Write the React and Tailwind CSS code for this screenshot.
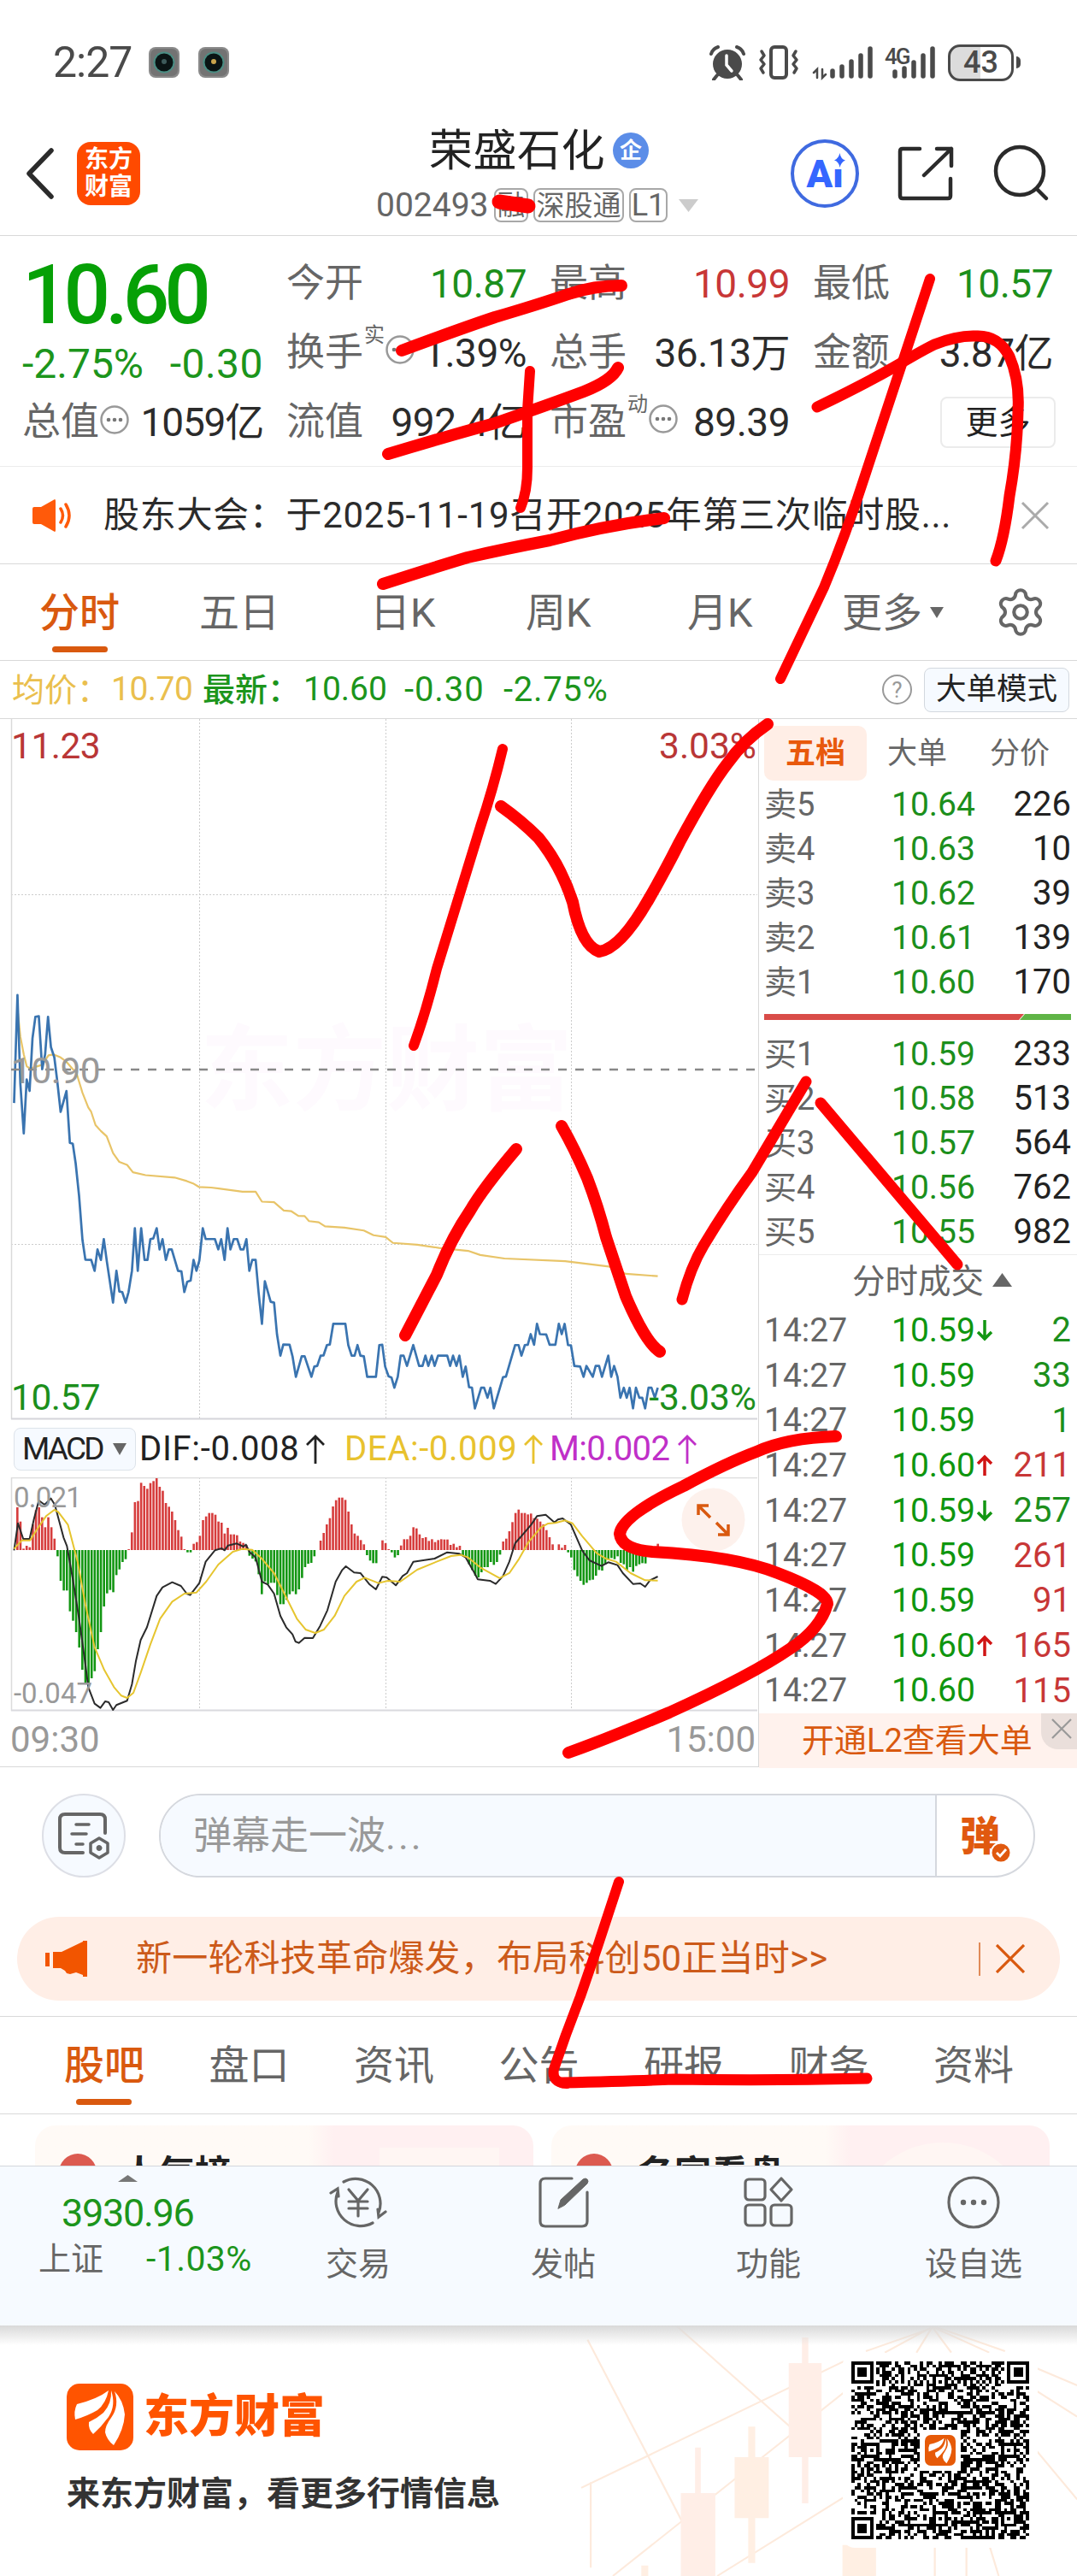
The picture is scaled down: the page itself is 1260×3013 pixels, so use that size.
import { Settings } from "lucide-react"

const stats = [
  [
    { label: "今开", value: "10.87", color: "text-[#1c8f1c]" },
    { label: "最高", value: "10.99", color: "text-[#c83737]" },
    { label: "最低", value: "10.57", color: "text-[#1c8f1c]" },
  ],
  [
    { label: "换手", sup: "实", info: true, value: "1.39%", color: "text-[#2b2b2b]" },
    { label: "总手", value: "36.13万", color: "text-[#2b2b2b]" },
    { label: "金额", value: "3.87亿", color: "text-[#2b2b2b]" },
  ],
  [
    { label: "流值", value: "992.4亿", color: "text-[#2b2b2b]" },
    { label: "市盈", sup: "动", info: true, value: "89.39", color: "text-[#2b2b2b]" },
  ],
]

const periods = [
  { name: "五日", width: "w-[200px]" },
  { name: "日K", width: "w-[182px]" },
  { name: "周K", width: "w-[189px]" },
  { name: "月K", width: "w-[181px]" },
]

const asks = [
  ["卖5", "10.64", "226"],
  ["卖4", "10.63", "10"],
  ["卖3", "10.62", "39"],
  ["卖2", "10.61", "139"],
  ["卖1", "10.60", "170"],
]

const bids = [
  ["买1", "10.59", "233"],
  ["买2", "10.58", "513"],
  ["买3", "10.57", "564"],
  ["买4", "10.56", "762"],
  ["买5", "10.55", "982"],
]

const trades = [
  { price: "10.59", dir: "down", vol: "2", buy: false },
  { price: "10.59", vol: "33", buy: false },
  { price: "10.59", vol: "1", buy: false },
  { price: "10.60", dir: "up", vol: "211", buy: true },
  { price: "10.59", dir: "down", vol: "257", buy: false },
  { price: "10.59", vol: "261", buy: true },
  { price: "10.59", vol: "91", buy: true },
  { price: "10.60", dir: "up", vol: "165", buy: true },
  { price: "10.60", vol: "115", buy: true },
]

const pricePoints =
  "29,465 36,98 42,400 49,568 55,385 61,424 67,245 73,172 80,170 87,350 93,300 99,172 105,275 112,310 118,390 125,495 137,424 144,600 150,603 156,670 163,780 170,930 176,997 188,998 195,1035 201,962 208,998 214,927 220,1000 233,1143 240,1035 246,1105 252,1107 259,1143 265,1107 272,1035 278,890 284,1035 291,890 298,998 304,998 310,927 316,925 323,890 329,962 335,927 342,998 348,962 354,962 367,1035 374,1037 380,1107 386,1072 393,1068 399,998 405,1035 411,1000 418,890 424,927 443,927 450,962 456,927 463,998 469,890 475,962 482,927 489,927 496,962 502,962 508,927 514,1035 520,998 527,998 533,1107 540,1215 546,1070 558,1140 565,1143 571,1250 578,1323 584,1285 597,1286 603,1325 610,1395 622,1325 628,1325 642,1395 648,1360 654,1358 661,1323 667,1322 674,1287 680,1285 687,1215 712,1215 718,1287 725,1323 731,1323 737,1287 743,1323 750,1325 757,1395 775,1395 782,1287 788,1286 794,1360 801,1393 807,1397 813,1432 820,1395 826,1323 832,1323 839,1358 852,1287 864,1358 871,1358 877,1323 883,1358 890,1323 896,1358 903,1323 922,1323 928,1358 934,1323 941,1358 947,1323 954,1395 960,1360 967,1430 973,1432 979,1502 992,1432 998,1432 1005,1466 1011,1432 1018,1502 1037,1396 1043,1394 1062,1287 1069,1287 1075,1323 1082,1287 1088,1286 1094,1250 1101,1286 1107,1215 1113,1250 1126,1251 1133,1286 1145,1286 1152,1215 1158,1250 1164,1215 1171,1287 1177,1288 1184,1358 1196,1360 1203,1395 1209,1358 1222,1395 1228,1358 1235,1358 1241,1395 1254,1323 1260,1395 1266,1358 1273,1395 1279,1466 1286,1432 1292,1466 1298,1432 1305,1502 1311,1432 1318,1466 1324,1466 1330,1502 1337,1432 1343,1432 1350,1466 1356,1432"

const avgPoints =
  "37,160 42,240 49,300 55,340 62,348 87,335 100,303 110,300 125,310 137,325 150,350 157,360 170,430 182,480 188,495 197,540 208,560 220,578 233,635 246,665 262,675 274,700 300,710 360,718 385,730 398,738 410,750 435,752 500,766 527,766 540,800 565,802 585,830 600,832 615,848 628,849 637,866 657,870 670,884 710,888 750,898 770,914 795,920 810,940 860,946 905,957 965,967 990,981 1040,993 1165,1002 1255,1020 1290,1045 1356,1053"

const difPoints =
  "29,460 37,365 48,420 61,420 70,350 80,285 92,300 105,278 113,300 131,415 138,445 150,560 163,700 176,860 182,940 195,998 207,1013 217,990 224,993 233,1020 240,1003 262,988 272,930 280,850 290,775 303,730 323,620 335,590 355,572 373,585 385,612 392,617 411,575 424,500 443,460 457,453 463,460 470,443 488,436 502,447 507,440 514,465 527,485 540,570 552,580 565,612 578,690 590,730 603,755 609,780 616,785 628,767 645,768 660,725 675,670 692,570 705,530 713,516 730,538 743,540 762,580 775,597 788,553 797,555 816,583 830,550 839,540 852,500 896,489 922,467 947,472 960,485 975,530 985,562 1010,567 1022,578 1037,550 1050,500 1062,435 1080,400 1095,370 1107,340 1125,335 1143,362 1150,352 1160,348 1177,370 1200,460 1215,495 1240,515 1254,502 1273,512 1284,540 1305,578 1320,576 1330,588 1340,565 1356,552"

const deaPoints =
  "29,455 45,425 62,425 75,390 95,340 112,318 120,325 140,370 160,500 176,650 195,800 215,880 235,940 250,970 262,978 275,960 290,890 310,790 330,700 355,640 380,612 405,608 425,570 450,510 480,465 500,455 520,458 540,490 565,540 590,625 612,700 630,738 650,750 668,738 690,690 710,620 735,570 752,556 780,575 800,567 825,570 860,528 900,500 930,480 950,476 965,485 990,520 1030,558 1050,540 1070,490 1090,430 1115,380 1130,366 1145,364 1165,355 1180,365 1200,410 1230,470 1250,490 1270,500 1300,540 1330,565 1356,566"

// one value per minute, positive above the zero line
const macdBars = [
  0, 150, 100, 5, 15, 10, 90, 140, 150, 115, 80, 115, 80, 40, -22, -108, -142, -142, -215, -248, -288, -342, -420, -470,
  -475, -450, -425, -348, -288, -198, -152, -140, -148, -88, -68, -42, -32, 3, 62, 168, 172, 236, 225, 215, 235, 242,
  252, 222, 208, 165, 152, 135, 105, 70, 47, 3, -8, -8, 22, 28, 50, 105, 118, 130, 130, 124, 100, 96, 58, 78, 55, 55,
  52, 30, 25, 18, -20, -30, -40, -85, -155, -110, -120, -115, -115, -158, -190, -190, -175, -155, -145, -155, -138, -98,
  -60, -48, -45, -22, 0, 33, 60, 90, 112, 153, 175, 184, 184, 176, 135, 90, 58, 50, 35, 20, -18, -37, -46, -46, 0, 34,
  24, 3, -8, -26, -18, 16, 38, 38, 50, 80, 76, 55, 42, 45, 32, 38, 28, 35, 38, 37, 37, 18, 22, 10, 15, -18, -24, -50,
  -70, -90, -96, -78, -60, -60, -42, -52, -42, -16, 30, 40, 66, 98, 130, 142, 130, 130, 125, 128, 112, 110, 100, 90, 70,
  45, 20, 0, 20, 8, 18, -8, -26, -70, -92, -108, -122, -115, -106, -104, -90, -70, -72, -50, -32, -28, -32, -22, -45,
  -50, -70, -60, -76, -56, -50, -46, -47, -10, 0, 2, 22,
]

const sections = ["股吧", "盘口", "资讯", "公告", "研报", "财务", "资料"]

function StatusBar() {
  return (
    <div className="flex h-[146px] items-center pl-[62px] text-[#4a4a4a]">
      <span className="w-[112px] text-[50px] leading-none tracking-[-1px]">2:27</span>
      <div className="flex gap-[22px]">
        {["#3d5a5a", "#c9a44c"].map((dot) => (
          <svg key={dot} className="h-9 w-9" viewBox="0 0 36 36">
            <rect width="36" height="36" rx="8" fill="#8a8a8a" />
            <rect x="2" y="2" width="32" height="32" rx="7" fill="#737373" />
            <circle cx="18" cy="18" r="12.5" fill="#4a8e84" />
            <circle cx="18" cy="18" r="10.5" fill="#0a1414" />
            <circle cx="18" cy="17" r="3" fill={dot} />
          </svg>
        ))}
      </div>
      <svg className="ml-[562px] h-[42px] w-[42px]" viewBox="0 0 42 42" fill="none" stroke="#4a4a4a">
        <circle cx="21" cy="23" r="17" fill="#4a4a4a" stroke="none" />
        <path d="M2 11a12 12 0 0 1 8-8M40 11a12 12 0 0 0-8-8M9 36l-4 5M33 36l4 5" strokeWidth="4" strokeLinecap="round" />
        <path d="M20 13v11l6 7" stroke="#fff" strokeWidth="3.5" strokeLinecap="round" />
      </svg>
      <svg className="ml-[15px] h-[42px] w-12" viewBox="0 0 48 42" fill="none" stroke="#4a4a4a" strokeWidth="4" strokeLinecap="round" strokeLinejoin="round">
        <rect x="15" y="3" width="18" height="36" rx="4" />
        <path d="M4 8l3 5-4 5 4 5-4 5 3 5" strokeWidth="3.5" />
        <path d="M44 8l-3 5 4 5-4 5 4 5-3 5" strokeWidth="3.5" />
      </svg>
      <svg className="ml-[15px] h-[42px] w-[72px]" viewBox="0 0 72 42" fill="none" stroke="#4a4a4a" strokeWidth="5.5" strokeLinecap="round">
        <path d="M24 31v6M35 26v11M46 20v17M57 13v24M68 5v32" />
        <path d="M6 39V29l-4 4M12 29v10l4-4" strokeWidth="2.5" />
      </svg>
      <div className="relative ml-[13px] h-[42px] w-[59px]">
        <span className="absolute left-0 top-[1px] text-[26px] font-medium leading-none tracking-[-2px]">4G</span>
        <svg className="h-[42px] w-[59px]" viewBox="0 0 59 42" fill="none" stroke="#4a4a4a" strokeWidth="5.5" strokeLinecap="round">
          <path d="M12 32v5M23 28v9M34 21v16M45 13v24M56 5v32" />
        </svg>
      </div>
      <div className="ml-[15px] flex h-[43px] w-[77px] items-center justify-center rounded-[14px] border-[3px] border-[#4a4a4a] bg-linear-to-r from-[#dcdcdc] from-50% to-white to-50%">
        <span className="text-[36px] font-medium leading-none">43</span>
      </div>
      <div className="ml-[3px] h-[14px] w-[5px] rounded-r-full bg-[#4a4a4a]" />
    </div>
  )
}

function Header() {
  return (
    <header className="flex h-[130px] items-start border-b border-[#d9d9d9] pl-[30px]">
      <svg className="mt-[27px] h-[60px] w-[34px]" viewBox="0 0 34 60" fill="none" stroke="#2b2b2b" strokeWidth="5.5" strokeLinecap="round" strokeLinejoin="round">
        <path d="M30 3L4 30l26 27" />
      </svg>
      <div className="ml-[26px] mt-5 flex h-[74px] w-[74px] flex-col items-center justify-center rounded-[16px] bg-[#ff4a00] text-[28px] font-bold leading-[32px] text-white">
        <span>东方</span>
        <span>财富</span>
      </div>
      <div className="ml-[276px] w-[377px]">
        <div className="ml-[62px] mt-[5px] flex h-[50px] items-center">
          <h1 className="text-[51px] leading-none tracking-[0.500px] text-[#222]">荣盛石化</h1>
          <span className="ml-[9px] flex h-[42px] w-[42px] items-center justify-center rounded-full bg-[#5b8de8] text-[26px] font-bold leading-none text-white">
            企
          </span>
        </div>
        <div className="mt-[19px] flex h-10 items-center text-[38px] leading-none text-[#666]">
          <span className="w-[138px] text-[39px]">002493</span>
          <span className="mr-[6px] flex h-10 w-10 items-center justify-center rounded-[8px] border-2 border-[#a8a8a8] text-[32px]">融</span>
          <span className="mr-[6px] flex h-10 w-[106px] items-center justify-center rounded-[8px] border-2 border-[#a8a8a8] text-[33px]">深股通</span>
          <span className="flex h-10 w-[45px] items-center justify-center rounded-[8px] border-2 border-[#a8a8a8] text-[36px]">L1</span>
          <svg className="ml-[13px] h-[15px] w-[23px]" viewBox="0 0 23 15">
            <path d="M0 0h23L11.500 15z" fill="#ccc" />
          </svg>
        </div>
      </div>
      <div className="relative ml-[108px] mt-[17px] flex h-20 w-20 items-center justify-center rounded-full border-[4px] border-[#3f6ae0] text-[#3566ff]">
        <span className="text-[45px] font-black leading-none">Ai</span>
        <svg className="absolute right-[10px] top-[11px] h-[21px] w-[17px]" viewBox="0 0 17 21">
          <rect x="2" y="5" width="13" height="15" fill="#fff" />
          <path d="M8.500 1q1 7 6.500 8.500-5 2-6.500 8.500-1-7-6.500-8.500 5-2 6.500-8.500z" fill="#3566ff" />
        </svg>
      </div>
      <svg className="ml-[45px] mt-[25px] h-[64px] w-[66px]" viewBox="0 0 66 64" fill="none" stroke="#2b2b2b" strokeWidth="4.500" strokeLinecap="round" strokeLinejoin="round">
        <path d="M26 3H6q-3 0-3 3v52q0 3 3 3h53q3 0 3-3V38M46 3h17v20M63 3L31 34" />
      </svg>
      <svg className="ml-[45px] mt-[23px] h-[68px] w-[68px]" viewBox="0 0 68 68" fill="none" stroke="#2b2b2b" strokeWidth="4.500" strokeLinecap="round">
        <circle cx="32" cy="31" r="28" />
        <path d="M52 52l11 11" />
      </svg>
    </header>
  )
}

function InfoDots() {
  return (
    <svg className="h-[34px] w-[34px] shrink-0" viewBox="0 0 34 34" fill="none" stroke="#999" strokeWidth="2.500">
      <circle cx="17" cy="17" r="15.500" />
      <g fill="#777" stroke="none">
        <circle cx="10" cy="17" r="2.300" />
        <circle cx="17" cy="17" r="2.300" />
        <circle cx="24" cy="17" r="2.300" />
      </g>
    </svg>
  )
}

function Quote() {
  return (
    <section className="flex h-[270px] border-b border-[#ececec] pt-[15px] leading-none">
      <div className="w-[308px] pl-[26px]">
        <div className="flex h-[108px] items-center text-[96px] font-medium tracking-[-6px] text-[#06a006]">10.60</div>
        <div className="flex h-[54px] items-center justify-between text-[48px] text-[#1c951c]">
          <span>-2.75%</span>
          <span className="tracking-[0.500px]">-0.30</span>
        </div>
        <div className="flex h-[81px] items-center text-[#666]">
          <span className="text-[45px]">总值</span>
          <span className="mb-[6px] ml-[1px]">
            <InfoDots />
          </span>
          <span className="ml-auto text-[46px] tracking-[-1.200px] text-[#2b2b2b]">1059亿</span>
        </div>
      </div>
      <div className="ml-[27px]">
        {stats.map((row, i) => (
          <div key={i} className="flex h-[81px] items-center gap-[27px]">
            {row.map((s) => (
              <div key={s.label} className="flex w-[281px] items-center">
                <span className="text-[45px] text-[#666]">{s.label}</span>
                {s.sup && <span className="mb-[42px] ml-[1px] text-[24px] text-[#666]">{s.sup}</span>}
                {s.info && (
                  <span className="mb-[8px] ml-[1px]">
                    <InfoDots />
                  </span>
                )}
                <span className={`ml-auto text-[46px] tracking-[-0.500px] ${s.color}`}>{s.value}</span>
              </div>
            ))}
            {i === 2 && (
              <button className="ml-[149px] h-[60px] w-[135px] rounded-[8px] border-2 border-[#ebebeb] text-[38px] text-[#222]">
                更多
              </button>
            )}
          </div>
        ))}
      </div>
    </section>
  )
}

function Notice() {
  return (
    <div className="flex h-[114px] items-center border-b border-[#d9d9d9] pl-[37px]">
      <svg className="h-10 w-[50px]" viewBox="0 0 50 40" fill="none" stroke="#ff5a0a" strokeWidth="3.500" strokeLinecap="round">
        <path d="M3 10h8L27 1q1 0 1 2v34q0 2-1 2L11 30H3q-2 0-2-2V12q0-2 2-2z" fill="#ff5a0a" stroke="none" />
        <path d="M34 12q5 8 0 16M40 7q8 13 0 26" />
      </svg>
      <p className="ml-[34px] w-[1000px] whitespace-nowrap text-[42px] leading-none tracking-[0.700px] text-[#2b2b2b]">
        股东大会：于2025-11-19召开2025年第三次临时股...
      </p>
      <svg className="ml-[73px] h-[34px] w-[34px]" viewBox="0 0 34 34" stroke="#aaa" strokeWidth="3">
        <path d="M2 2l30 30M32 2L2 32" />
      </svg>
    </div>
  )
}

function PeriodTabs() {
  return (
    <nav className="flex h-[113px] items-center border-b border-[#d9d9d9] pl-[46px] text-[47px] leading-none text-[#666]">
      <div className="relative w-[187px] font-medium text-[#d9590f]">
        分时
        <span className="absolute left-[15px] top-[63px] h-[7px] w-[65px] rounded-full bg-[#d9590f]" />
      </div>
      {periods.map((p) => (
        <div key={p.name} className={p.width}>
          {p.name}
        </div>
      ))}
      <div className="flex w-[178px] items-center">
        更多
        <svg className="ml-[9px] h-[13px] w-4" viewBox="0 0 16 13">
          <path d="M0 0h16L8 13z" fill="#666" />
        </svg>
      </div>
      <Settings className="h-[62px] w-[62px] text-[#666]" strokeWidth={1.6} />
    </nav>
  )
}

function ChartInfo() {
  return (
    <div className="flex h-[68px] items-center border-b border-[#d9d9d9] pl-[14px] text-[38px] leading-none text-[#1c951c]">
      <span className="w-[116px] text-[#eabf4e]">均价：</span>
      <span className="w-[107px] text-[39px] tracking-[-0.500px] text-[#eabf4e]">10.70</span>
      <span className="w-[118px] font-medium">最新：</span>
      <span className="w-[118px] text-[39px]">10.60</span>
      <span className="w-[116px] text-[40px] tracking-[0.900px]">-0.30</span>
      <span className="text-[40px] tracking-[0.700px]">-2.75%</span>
      <span className="ml-auto flex h-[35px] w-[35px] items-center justify-center rounded-full border-[2.500px] border-[#999] text-[26px] text-[#999]">?</span>
      <button className="ml-[14px] mr-[9px] h-[52px] w-[170px] rounded-[8px] border border-[#d3d8de] bg-[#f6faff] text-[35.500px] text-[#222]">
        大单模式
      </button>
    </div>
  )
}

function PriceChart() {
  return (
    <svg className="block h-[820px] w-[886px]" viewBox="0 0 886 820" fill="none">
      <text x="234" y="449" fontSize="109" fontWeight="700" fill="#fefafe">
        东方财富
      </text>
      <g stroke="#ccc" strokeDasharray="2 2">
        <path d="M233.500 0v818M451.500 0v818M668.500 0v818M13 205.500h873M13 614.500h873" />
      </g>
      <path d="M13.500 0v819" stroke="#d9d9d9" strokeWidth="1.500" />
      <path d="M13 818.500h873" stroke="#d5d5da" strokeWidth="2" />
      <g transform="translate(0 289) scale(0.5675 0.3444)" strokeLinejoin="round">
        <polyline points={avgPoints} stroke="#e8c468" strokeWidth="2.200" vectorEffect="non-scaling-stroke" />
        <polyline points={pricePoints} stroke="#3a74b0" strokeWidth="2.700" vectorEffect="non-scaling-stroke" />
      </g>
      <path d="M13 410h873" stroke="#888" strokeWidth="2.500" strokeDasharray="10 10" />
      <g fontSize="42.500">
        <text x="13" y="46" letterSpacing="-0.500" fill="#b93636">11.23</text>
        <text x="885" y="46" textAnchor="end" fill="#b93636">3.03%</text>
        <text x="13" y="426" letterSpacing="-0.500" fill="#999">10.90</text>
        <text x="13" y="808" letterSpacing="-0.500" fill="#1c8f1c">10.57</text>
        <text x="885" y="808" textAnchor="end" fill="#1c8f1c">-3.03%</text>
      </g>
    </svg>
  )
}

function UpArrow({ className }) {
  return (
    <svg className={className} viewBox="0 0 22 34" fill="none" stroke="currentColor" strokeWidth="2.800">
      <path d="M11 34V2M1 12L11 2l10 10" />
    </svg>
  )
}

function MacdLegend() {
  return (
    <div className="flex h-[67px] items-center pl-4 text-[40px] leading-none">
      <button className="flex h-[50px] w-[143px] items-center rounded-[8px] border border-[#dde3ea] bg-[#f6faff] pl-[9px] text-[37px] tracking-[-2.800px] text-[#222]">
        MACD
        <svg className="ml-[12px] h-[14px] w-4" viewBox="0 0 16 14">
          <path d="M0 0h16L8 14z" fill="#666" />
        </svg>
      </button>
      <span className="ml-[4px] w-[195px] tracking-[0.700px] text-[#222]">DIF:-0.008</span>
      <UpArrow className="h-[34px] w-[22px] text-[#222]" />
      <span className="ml-[23px] w-[210px] tracking-[0.600px] text-[#e8c22e]">DEA:-0.009</span>
      <UpArrow className="h-[34px] w-[22px] text-[#e8c22e]" />
      <span className="ml-[8px] w-[150px] tracking-[-0.700px] text-[#c030c8]">M:0.002</span>
      <UpArrow className="h-[34px] w-[22px] text-[#c030c8]" />
    </div>
  )
}

function MacdChart() {
  return (
    <svg className="block h-[274px] w-[886px]" viewBox="0 0 886 274" fill="none">
      <path d="M233.500 0v272M451.500 0v272M668.500 0v272" stroke="#ccc" strokeDasharray="2 2" />
      <path d="M13 .5h873M13.500 0v273" stroke="#dcdcdc" strokeWidth="1.500" />
      <path d="M13 272.500h873" stroke="#d9d9de" strokeWidth="2" />
      {macdBars.map((v, i) => {
        const h = Math.abs(v) / 3
        return (
          <rect
            key={i}
            x={15.4 + i * 3.62}
            y={v > 0 ? 85 - h : 85}
            width="2.600"
            height={h}
            fill={v > 0 ? "#d63c3c" : "#129612"}
          />
        )
      })}
      <g transform="translate(0 -68) scale(0.5675 0.3333)" strokeLinejoin="round">
        <polyline points={difPoints} stroke="#2b2b2b" strokeWidth="2" vectorEffect="non-scaling-stroke" />
        <polyline points={deaPoints} stroke="#e6c52f" strokeWidth="2" vectorEffect="non-scaling-stroke" />
      </g>
      <g fontSize="33" fill="#999" letterSpacing="-0.800">
        <text x="16" y="35">0.021</text>
        <text x="16" y="264" letterSpacing="0">-0.047</text>
      </g>
      <circle cx="834.500" cy="49.500" r="37" fill="#fdf1ec" />
      <path d="M831 47l-13-13M817 44V33h12M838 53l13 13M852 55v12h-12" stroke="#d9590f" strokeWidth="3.500" />
    </svg>
  )
}

function BookRow({ row }) {
  return (
    <div className="flex h-[52px] items-center">
      <span className="w-[149px] text-[38px] text-[#666]">{row[0]}</span>
      <span className="text-[39px] text-[#1c8f1c]">{row[1]}</span>
      <span className="ml-auto text-[40px] text-[#222]">{row[2]}</span>
    </div>
  )
}

function TradeArrow({ dir }) {
  return (
    <svg className="ml-[1px] h-[26px] w-5" viewBox="0 0 20 26" fill="none" stroke={dir === "up" ? "#d01414" : "#129612"} strokeWidth="3.500">
      <path d={dir === "up" ? "M10 25V3M2 11l8-8 8 8" : "M10 1v22M2 15l8 8 8-8"} />
    </svg>
  )
}

function OrderBook() {
  return (
    <aside className="w-[373px] border-l border-[#d9d9d9] leading-none">
      <div className="flex h-[74px] items-center pl-[6px] pt-[6px] text-[35px] text-[#666]">
        <span className="flex h-16 w-[120px] items-center justify-center rounded-[10px] bg-[#ffeee6] font-bold text-[#e8590c]">五档</span>
        <span className="ml-[24px] w-[120px]">大单</span>
        <span>分价</span>
      </div>
      <div className="pl-[6px] pr-[7px]">
        {asks.map((r) => (
          <BookRow key={r[0]} row={r} />
        ))}
      </div>
      <svg className="my-[11px] ml-[6px] block h-[7px] w-[359px]" viewBox="0 0 359 7">
        <path d="M0 0h304l-6 7H0z" fill="#d94c48" />
        <path d="M305 0h54v7h-60z" fill="#5fb446" />
      </svg>
      <div className="mt-[14px] pl-[6px] pr-[7px]">
        {bids.map((r) => (
          <BookRow key={r[0]} row={r} />
        ))}
      </div>
      <div className="flex h-[63px] items-center border-t border-[#ececec] pl-[109px] text-[38.500px] text-[#666]">
        分时成交
        <svg className="mb-[4px] ml-[10px] h-4 w-[23px]" viewBox="0 0 23 16">
          <path d="M0 16h23L11.500 0z" fill="#666" />
        </svg>
      </div>
      <div className="pl-[6px] pr-[7px]">
        {trades.map((t, i) => (
          <div key={i} className="flex h-[52.700px] items-center text-[39px]">
            <span className="w-[149px] text-[#666]">14:27</span>
            <span className="text-[#0f960f]">{t.price}</span>
            {t.dir && <TradeArrow dir={t.dir} />}
            <span className={`ml-auto text-[40px] ${t.buy ? "text-[#c83737]" : "text-[#1c8f1c]"}`}>{t.vol}</span>
          </div>
        ))}
      </div>
      <div className="relative flex h-[64px] items-center bg-[#fff2ed] pl-[50px] text-[38px] text-[#d9590f]">
        开通L2查看大单
        <span className="absolute right-0 top-0 flex h-[42px] w-[42px] items-start justify-center rounded-bl-[20px] bg-[#eadfdb] pt-[6px]">
          <svg className="ml-[6px] h-6 w-6" viewBox="0 0 24 24" stroke="#999" strokeWidth="2.200">
            <path d="M1 1l22 22M23 1L1 23" />
          </svg>
        </span>
      </div>
    </aside>
  )
}

function Danmu() {
  return (
    <div className="flex h-[176px] items-center border-t border-[#d9d9d9] pb-[15px] pl-[49px] leading-none">
      <div className="flex h-[98px] w-[98px] items-center justify-center rounded-full border-2 border-[#dddfe6] bg-[#f6faff]">
        <svg className="h-[56px] w-[62px]" viewBox="0 0 62 56" fill="none" stroke="#666" strokeWidth="4" strokeLinecap="round">
          <path d="M30 48H9q-6 0-6-6V9q0-6 6-6h41q6 0 6 6v16" />
          <path d="M22 15h15M17 26h17M22 38h8" strokeWidth="3.500" />
          <path d="M49 31l10 6v11l-10 6-10-6V37z" strokeWidth="3.500" strokeLinejoin="round" />
          <circle cx="49" cy="42.500" r="3" fill="#666" strokeWidth="1" />
        </svg>
      </div>
      <div className="ml-[39px] flex h-[98px] w-[1025px] overflow-hidden rounded-full border-2 border-[#d5d8de]">
        <div className="flex w-[908px] items-center border-r-2 border-[#d5d8de] bg-[#f6faff] pl-[38px] text-[45px] text-[#999]">
          弹幕走一波<span className="tracking-[3px]">...</span>
        </div>
        <div className="relative flex flex-1 items-center pl-[27px] text-[47px] font-black text-[#e0590f]">
          弹
          <svg className="absolute left-[62px] top-[54px] h-[26px] w-[26px]" viewBox="0 0 26 26" fill="none">
            <circle cx="13" cy="13" r="11.500" fill="#e0590f" stroke="#fff" strokeWidth="2" />
            <path d="M8 13l4 4 7-8" stroke="#fff" strokeWidth="2.800" />
          </svg>
        </div>
      </div>
    </div>
  )
}

function Promo() {
  return (
    <div className="mx-5 flex h-[98px] items-center rounded-full bg-[#ffeee6] pl-8">
      <svg className="h-[42px] w-[52px]" viewBox="0 0 52 42" fill="#f25500">
        <path d="M1 14h5v16H1zM10 13h10L45 1V0h5v42h-5v-2l-8-3-7 2-4-1-2-3-5-3h-9z" />
      </svg>
      <span className="ml-[55px] whitespace-nowrap text-[42px] leading-none tracking-[0.200px] text-[#cc5a1a]">新一轮科技革命爆发，布局科创50正当时&gt;&gt;</span>
      <span className="ml-auto h-[39px] w-[2px] bg-[#e08a58]" />
      <svg className="ml-[18px] mr-[41px] h-[34px] w-[34px]" viewBox="0 0 34 34" stroke="#d9590f" strokeWidth="3.200">
        <path d="M1 1l32 32M33 1L1 33" />
      </svg>
    </div>
  )
}

function SectionTabs() {
  return (
    <nav className="mt-[18px] flex h-[115px] items-center border-y border-[#d9d9d9] pl-[75px] text-[47px] leading-none text-[#666]">
      {sections.map((name, i) => (
        <div key={name} className={`relative w-[169.500px] shrink-0 ${i === 0 ? "font-medium text-[#d9590f]" : ""}`}>
          {name}
          {i === 0 && <span className="absolute left-[14px] top-[63px] h-[7px] w-[65px] rounded-full bg-[#d9590f]" />}
        </div>
      ))}
    </nav>
  )
}

function Cards() {
  return (
    <div className="flex h-[60px] gap-[21px] overflow-hidden pl-[41px] pt-[13px]">
      {["人气榜", "名家看盘"].map((title, i) => (
        <div
          key={title}
          className="relative flex h-[130px] w-[583px] shrink-0 items-start overflow-hidden rounded-[24px] bg-linear-to-r from-[#fffaf6] from-55% to-[#fff0f1] to-60% pl-[28px] pt-[33px]"
        >
          <span className="h-[44px] w-[44px] shrink-0 rounded-full bg-[#dc5a50]" />
          <span className="ml-[29px] mt-[3px] text-[43px] font-bold leading-none text-[#222]">{title}</span>
          {i === 0 ? (
            <span className="absolute right-[40px] top-[26px] h-20 w-[140px] bg-[#fff6f3]" />
          ) : (
            <span className="absolute right-[20px] top-[20px] h-[110px] w-[210px] rounded-t-full bg-[#fff6f3]" />
          )}
        </div>
      ))}
    </div>
  )
}

const actions = [
  {
    name: "交易",
    icon: (
      <>
        <path d="M17 8a29 29 0 0 1 41 36M51 56A29 29 0 0 1 10 20M2 21l8-5 1 9M66 43l-8 6-1-9" />
        <path d="M23 17l11 13 11-13M34 30v18M23 31h22M23 39h22" />
      </>
    ),
  },
  {
    name: "发帖",
    icon: (
      <>
        <path d="M44 4H13q-6 0-6 6v44q0 6 6 6h43q6 0 6-6V20" />
        <path d="M28 39l3-10L57 5q3-2 5 0t0 5L36 35z" fill="#666" strokeWidth="1" />
      </>
    ),
  },
  {
    name: "功能",
    icon: (
      <>
        <rect x="7" y="5" width="23" height="24" rx="4" />
        <rect x="7" y="35" width="23" height="24" rx="4" />
        <rect x="37" y="35" width="24" height="24" rx="4" />
        <path d="M49 4l12 13-12 13-12-13z" strokeLinejoin="round" />
      </>
    ),
  },
  {
    name: "设自选",
    icon: (
      <>
        <circle cx="34" cy="32" r="29" />
        <g fill="#666" stroke="none">
          <circle cx="22" cy="32" r="3.200" />
          <circle cx="34" cy="32" r="3.200" />
          <circle cx="46" cy="32" r="3.200" />
        </g>
      </>
    ),
  },
]

function BottomBar() {
  return (
    <div className="flex h-[187px] border-t border-[#d3d6dc] bg-[#f6faff] leading-none">
      <div className="w-[299px]">
        <svg className="ml-[138px] mt-[10px] block h-[8px] w-[23px]" viewBox="0 0 23 8">
          <path d="M0 8h23L11.500 0z" fill="#777" />
        </svg>
        <div className="ml-[72px] mt-[14px] text-[45px] tracking-[-1.300px] text-[#1c951c]">3930.96</div>
        <div className="ml-[45px] mt-[11px] flex h-[40px] items-center">
          <span className="w-[126px] text-[38px] text-[#666]">上证</span>
          <span className="text-[41px] tracking-[0.400px] text-[#1c951c]">-1.03%</span>
        </div>
      </div>
      {actions.map((a) => (
        <div key={a.name} className="flex w-60 flex-col items-center pt-[10px]">
          <svg className="h-16 w-[68px]" viewBox="0 0 68 64" fill="none" stroke="#666" strokeWidth="3.200" strokeLinecap="round">
            {a.icon}
          </svg>
          <span className="mt-[21px] text-[38px] text-[#666]">{a.name}</span>
        </div>
      ))}
    </div>
  )
}

function Swoosh({ className, fill }) {
  return (
    <svg className={className} viewBox="0 0 78 78">
      <rect width="78" height="78" rx="15" fill={fill} />
      <g fill="#fff">
        <path d="M49 8Q36 18 12 24q-4 8-2 18 14-4 26-11 10-8 13-23z" />
        <path d="M52 8q1 15-9 26-8 7-17 11-1 8 5 14 10-9 18-20 9-14 3-31z" />
        <path d="M56 9q6 17-4 31-7 9-7 17 2 9 10 15 12-18 13-36-2-17-12-27z" />
      </g>
    </svg>
  )
}

const QR_SIZE = 57

function isFinder(x, y) {
  const inBox = (ox, oy) => x >= ox && x < ox + 8 && y >= oy && y < oy + 8
  return inBox(0, 0) || inBox(QR_SIZE - 8, 0) || inBox(0, QR_SIZE - 8)
}

function qrPath() {
  let seed = 2493
  let d = ""
  const marks = [[28, 6], [6, 28], [50, 28], [28, 50], [50, 50]]
  for (let y = 0; y < QR_SIZE; y++) {
    for (let x = 0; x < QR_SIZE; x++) {
      seed = (seed * 1103515245 + 12345) % 2147483648
      if (isFinder(x, y)) continue
      if (x > 21 && x < 35 && y > 21 && y < 35) continue
      let on = seed / 2147483648 > 0.49
      if (x === 6 || y === 6) on = (x + y) % 2 === 0
      const mark = marks.find(([mx, my]) => Math.abs(mx - x) < 3 && Math.abs(my - y) < 3)
      if (mark) on = Math.max(Math.abs(mark[0] - x), Math.abs(mark[1] - y)) !== 1
      if (on) d += `M${x} ${y}h1v1h-1z`
    }
  }
  return d
}

function QrCode() {
  return (
    <div className="relative flex h-[228px] w-[228px] items-center justify-center rounded-[14px] bg-white">
      <svg className="h-[208px] w-[208px]" viewBox="0 0 57 57" shapeRendering="crispEdges">
        <path d={qrPath()} />
        {[[0, 0], [50, 0], [0, 50]].map(([x, y]) => (
          <g key={`${x}-${y}`}>
            <path fillRule="evenodd" d={`M${x} ${y}h7v7h-7zM${x + 1} ${y + 1}v5h5v-5z`} />
            <rect x={x + 2} y={y + 2} width="3" height="3" />
          </g>
        ))}
      </svg>
      <Swoosh className="absolute left-[96px] top-[96px] h-9 w-9" fill="#e65a08" />
    </div>
  )
}

function Footer() {
  return (
    <footer className="relative flex h-[293px] justify-between pl-[78px] pr-[46px] pt-8 leading-none">
      <svg className="absolute inset-0 h-[293px] w-[1260px]" viewBox="0 0 1260 293" fill="none">
        <g transform="translate(680 -10) scale(0.37 0.3333)">
          <path
            d="M300 30l360 355M20 80l300 640M0 600l860-460M100 909l760-670M430 909l420-290M900 120l220-85 220 85M960 125l150-90 180 90M1060 125l50-90 60 90M1440 180l128 60M1440 260l128 90M1440 470l128 170M1118 800v109M1218 800v109M1290 800l30 109M30 580v300"
            stroke="#fdeadc"
            strokeWidth="6"
          />
          <g fill="#ffefe3">
            <path d="M656 162h104v330H656zM698 72h20v582h-20z" fill="#ffeee7" />
            <path d="M485 492h108v214H485zM528 385h22v478h-22z" />
            <path d="M315 618h109v291H315zM360 458h18v160h-18z" fill="#ffeee7" />
            <path d="M826 800h106v109H826zM190 872h22v37h-22z" />
          </g>
        </g>
      </svg>
      <div className="absolute inset-x-0 top-0 h-[23px] bg-linear-to-b from-[#d9d9d9] to-[#d9d9d900]" />
      <div className="relative">
        <div className="mt-[36px] flex items-center">
          <Swoosh className="h-[78px] w-[78px]" fill="#ff5400" />
          <span className="ml-[12px] text-[53px] font-black text-[#ff5400]">东方财富</span>
        </div>
        <p className="mt-[32px] text-[39px] font-bold text-[#333]">来东方财富，看更多行情信息</p>
      </div>
      <QrCode />
    </footer>
  )
}

// freehand marker strokes drawn over the page
const strokes = [
  ["M584 236L618 241", 17],
  ["M470 410Q540 384 579 371Q630 356 665 344Q695 334 727 334", 14],
  ["M454 531Q520 511 579 495Q640 474 683 458Q716 445 723 430", 14],
  ["M620 434L617 480L617 547Q617 575 609 594", 12],
  ["M448 683Q510 663 547 652Q590 642 643 632Q710 614 777 606", 14],
  ["M1088 326L1057 420L1014 550Q990 625 964 687L913 794", 12],
  ["M956 476Q1010 450 1045 430Q1075 412 1093 403Q1120 392 1142 393Q1168 392 1181 417Q1193 445 1191 480Q1190 530 1181 580Q1175 630 1165 656", 13],
  ["M588 876Q577 922 562 967L511 1133Q498 1185 484 1223", 12],
  ["M586 943Q610 960 630 980Q656 1012 670 1055Q680 1106 701 1113Q726 1110 760 1050Q780 1015 795 985Q830 920 851 893Q870 866 898 847", 14],
  ["M604 1344Q565 1390 550 1416Q527 1450 511 1491L474 1562", 14],
  ["M657 1317Q672 1343 687 1378Q700 1412 709 1447L732 1516Q755 1570 772 1581", 14],
  ["M798 1520Q808 1482 823 1457Q850 1412 880 1371L943 1265", 13],
  ["M960 1290L1120 1479", 13],
  ["M978 1680Q920 1682 885 1698Q850 1711 800 1738Q728 1772 725 1794Q727 1812 763 1815Q860 1820 910 1840Q968 1862 968 1876Q960 1905 925 1928Q880 1959 783 2003Q710 2034 665 2050", 14],
  ["M724 2201L699 2277L679 2335L662 2380L648 2420Q645 2436 663 2437", 12],
  ["M658 2436Q740 2434 788 2432Q900 2434 1014 2431", 13],
]

function Scribbles() {
  return (
    <svg
      className="pointer-events-none absolute left-0 top-0 h-[3013px] w-[1260px]"
      viewBox="0 0 1260 3013"
      fill="none"
      stroke="#ff0000"
      strokeLinecap="round"
      strokeLinejoin="round"
    >
      {strokes.map(([d, w]) => (
        <path key={d} d={d} strokeWidth={w} />
      ))}
    </svg>
  )
}

export default function App() {
  return (
    <div className="relative h-[3013px] w-[1260px] overflow-hidden bg-white font-['Roboto','Noto_Sans_CJK_SC',sans-serif]">
      <StatusBar />
      <Header />
      <Quote />
      <Notice />
      <PeriodTabs />
      <ChartInfo />
      <div className="flex h-[1225px]">
        <div className="w-[887px]">
          <PriceChart />
          <MacdLegend />
          <MacdChart />
          <div className="flex h-[66px] items-center justify-between pl-[12px] pr-[3px] text-[42px] leading-none text-[#999]">
            <span>09:30</span>
            <span>15:00</span>
          </div>
        </div>
        <OrderBook />
      </div>
      <Danmu />
      <Promo />
      <SectionTabs />
      <Cards />
      <BottomBar />
      <Footer />
      <Scribbles />
    </div>
  )
}
